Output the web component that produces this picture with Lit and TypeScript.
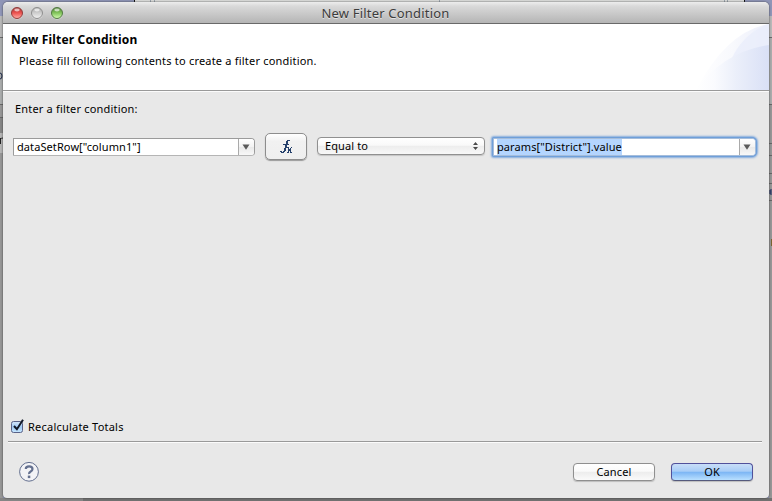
import { LitElement, html, css, svg } from "lit";
import { customElement, property } from "lit/decorators.js";

const arrow = html`<svg width="8" height="6" viewBox="0 0 8 6"><path d="M.5.5h7L4 5.8z" fill="#5a5a5a"/></svg>`;

@customElement("combo-field")
class ComboField extends LitElement {
  @property() value = "";
  @property({ type: Boolean, reflect: true }) focused = false;
  static styles = css`
    :host { display: flex; box-sizing: border-box; height: 18px; border: 1px solid #9b9b9b; border-bottom-color: #b5b5b5; border-radius: 0 4px 4px 0; background: #fff; }
    :host([focused]) { border-color: #a5bddb; box-shadow: 0 0 0 1px #6f9fd9, 0 0 2px 2px #84abdc; border-radius: 1px 4px 4px 1px; }
    .text { flex: 1; padding-left: 3px; line-height: 16px; white-space: pre; letter-spacing: .09px; }
    .text span { display: inline-block; height: 16px; }
    :host([focused]) .text span { background: #b4d5fe; }
    .drop { width: 16px; border-left: 1px solid #aaa; display: grid; align-items: center; justify-items: start; padding-left: 3px; box-sizing: border-box; background: linear-gradient(#fff, #f3f3f3 50%, #e9e9e9 51%, #f8f8f8); border-radius: 0 3px 3px 0; }
  `;
  render() {
    return html`<div class="text"><span>${this.value}</span></div><div class="drop">${arrow}</div>`;
  }
}

@customElement("push-button")
class PushButton extends LitElement {
  @property({ type: Boolean, reflect: true }) primary = false;
  static styles = css`
    :host { box-sizing: border-box; width: 82px; height: 18px; border: 1px solid #8f8f8f; border-radius: 4px; text-align: center; line-height: 16px; background: linear-gradient(#fff, #fafafa 45%, #ededed 52%, #fafafa); box-shadow: 0 1px 1px #bdbdbd; }
    :host([primary]) { border-color: #51519b; border-bottom-color: #555a7c; background: linear-gradient(#c9def8, #a8cdf7 45%, #7db6f4 52%, #b9e0ff); }
  `;
  render() { return html`<slot></slot>`; }
}

@customElement("app-root")
class AppRoot extends LitElement {
  static styles = css`
    :host { display: block; position: relative; box-sizing: border-box; width: 772px; height: 501px; padding: 2px 3px 3px; overflow: hidden; font: 11px "Noto Sans", "Open Sans", sans-serif; color: #000; background: #a5a5a5; }
    .behind { position: absolute; inset: 0; }
    .behind svg { display: block; }
    .window { position: relative; height: 496px; display: flex; flex-direction: column; border-radius: 5px 5px 4px 4px; overflow: hidden; background: #e8e8e8; box-shadow: 0 0 2px #333; }
    .bar { box-sizing: border-box; height: 22px; display: flex; align-items: center; padding-left: 7px; background: linear-gradient(#ededed, #d9d9d9 20%, #b5b5b5); border-bottom: 1px solid #696969; }
    .lights { display: flex; gap: 6px; width: 80px; }
    .lights svg { display: block; width: 14px; height: 14px; }
    .caption { flex: 1; text-align: center; padding-right: 88px; font-size: 13px; line-height: 20px; color: #3c3c3c; text-shadow: 0 1px #e4e4e4; letter-spacing: .2px; }
    .header { box-sizing: border-box; height: 67px; display: flex; background: #fff; border-bottom: 1px solid #999; }
    .titles { flex: 1; padding: 8px 0 0 8px; }
    .title { font-size: 12px; line-height: 16px; font-weight: 700; letter-spacing: .17px; }
    .message { padding-left: 8px; line-height: 16px; margin-top: 5px; letter-spacing: .2px; }
    .wave { display: block; }
    .content { flex: 1; display: flex; flex-direction: column; border-top: 1px solid #fbfbfb; padding: 0 5px; }
    .prompt { margin: 9px 0 0 7px; line-height: 16px; letter-spacing: .18px; }
    .row { display: flex; align-items: flex-start; margin-top: 16px; padding-left: 5px; height: 30px; }
    .left { width: 242px; margin-top: 5px; }
    .right { width: 263px; margin: 5px 0 0 8px; }
    .fx { box-sizing: border-box; width: 42px; height: 27px; margin-left: 10px; display: grid; place-items: center; border: 1px solid #8d8d8d; border-radius: 5px; background: linear-gradient(#fff, #f1f1f1 30%, #efefef); box-shadow: 0 1px 1px #999; }
    .select { box-sizing: border-box; width: 168px; height: 18px; margin: 4px 0 0 10px; padding: 0 5px 0 7px; display: flex; justify-content: space-between; align-items: center; border: 1px solid #909090; border-radius: 4px; background: linear-gradient(#fff, #f9f9f9 45%, #ededed 52%, #f8f8f8); box-shadow: 0 1px 1px #c4c4c4; line-height: 16px; letter-spacing: .1px; }
    .check { display: flex; align-items: center; margin: auto 0 6px 3px; height: 16px; letter-spacing: .22px; }
    .check svg { margin-right: 3px; }
    .check .t { padding-bottom: 2px; }
    .footer { height: 57px; display: flex; box-sizing: border-box; margin: 0 7px 0 5px; border-top: 1px solid #999; box-shadow: inset 0 1px #fbfbfb; padding: 19px 9px 0 11px; }
    .help { flex: 1; }
    .footer push-button + push-button { margin-left: 16px; }
    .footer push-button { margin-top: 2px; letter-spacing: .15px; }
    .t { white-space: pre; }
  `;

  light(id: string, dark: string, mid: string, pale: string, edge: string) {
    return html`<svg viewBox="0 0 14 14"><defs><linearGradient id=${id} x2="0" y2="1"><stop offset="0" stop-color=${dark}/><stop offset=".5" stop-color=${mid}/><stop offset="1" stop-color=${pale}/></linearGradient></defs>
      <circle cx="7" cy="7.5" r="6" fill="#eee" opacity=".7"/><circle cx="7" cy="7" r="5.5" fill="url(#${id})" stroke=${edge}/><ellipse cx="7" cy="4" rx="2.7" ry="1.4" fill="#fff" opacity=".65"/></svg>`;
  }

  backdrop() {
    const sides = [0, 769].map(x => svg`
      <rect x=${x} width="3" height="16" fill="#8f95b7"/><rect x=${x} y="16" width="3" height="21" fill="#b8b8b8"/>
      <rect x=${x} y="37" width="3" height="1" fill="#696969"/><rect x=${x} y="38" width="3" height="66" fill="#a9abab"/>
      <rect x=${x} y="104" width="3" height="1" fill="#666"/><rect x=${x} y="105" width="3" height="396" fill="#969696"/>`);
    return html`<svg width="772" height="501" viewBox="0 0 772 501">
      <rect width="772" height="501" fill="#8f95b7"/><rect x="135" width="610" height="3" fill="#dedfdd"/>
      <path d="M134.5 0v3M744.5 0v3" stroke="#111"/><path d="M150.5 0v3M154.5 0v3M439.5 0v3M724.5 0v3M727.5 0v3" stroke="#9ba5ae"/>
      ${sides}
      <path d="M0 117.5h3M769 143.5h3M769 155.5h3M769 173.5h3M769 183.5h3M769 200.5h3" stroke="#666"/>
      <rect y="118" width="3" height="16" fill="#858585"/><rect y="133" width="3" height="20" fill="#b5b5b5"/>
      <path d="M0 73q2 0 2 3t-2 3" fill="none" stroke="#182445"/><path d="M.5 144v-6M.5 139q1-1 2.5-1" fill="none" stroke="#222"/>
      <path d="M772 190h-2v4h2M770 192h2" fill="none" stroke="#15255d"/><rect x="771" y="239" width="1" height="7" fill="#786330"/>
      <rect y="498" width="83" height="3" fill="#858585"/><rect x="83" y="498" width="689" height="3" fill="#707070"/>
    </svg>`;
  }

  render() {
    return html`
      <div class="behind">${this.backdrop()}</div>
      <div class="window">
        <div class="bar">
          <div class="lights">
            ${this.light("r", "#9d3434", "#ee5350", "#ffb2a9", "#8f3c3b")}
            ${this.light("g", "#a5a5a5", "#cfcfcf", "#f3f3f3", "#8d8d8d")}
            ${this.light("n", "#4d7c32", "#83c65c", "#d6ffb4", "#527844")}
          </div>
          <div class="caption"><span class="t">New Filter Condition</span></div>
        </div>
        <div class="header">
          <div class="titles">
            <div class="title"><span class="t">New Filter Condition</span></div>
            <div class="message"><span class="t">Please fill following contents to create a filter condition.</span></div>
          </div>
          <svg class="wave" width="80" height="66" viewBox="0 0 80 66">
            <defs>
              <linearGradient id="w1"><stop offset="0" stop-color="#fff"/><stop offset=".5" stop-color="#f8f9fd"/><stop offset="1" stop-color="#eceffb"/></linearGradient>
              <linearGradient id="w2"><stop offset="0" stop-color="#fff"/><stop offset=".25" stop-color="#fafbfe"/><stop offset=".55" stop-color="#ebeffa"/><stop offset="1" stop-color="#d9e0f6"/></linearGradient>
            </defs>
            <path d="M7 66Q38 7 80 0V66z" fill="url(#w1)"/>
            <path d="M42 36Q54 9 80 0V40z" fill="#e8ecfb" opacity=".7"/>
            <path d="M7 66Q34 28 80 21V66z" fill="url(#w2)"/>
          </svg>
        </div>
        <div class="content">
          <div class="prompt"><span class="t">Enter a filter condition:</span></div>
          <div class="row">
            <combo-field class="left" value='dataSetRow["column1"]'></combo-field>
            <div class="fx"><svg width="14" height="15" viewBox="0 0 14 15" fill="#25406b" shape-rendering="crispEdges"><path d="M8 1h3v1H8zM7 2h2v3H7zM4 5h6v1H4zM6 6h2v3H6zM5 9h2v3H5zM4 12h2v1H4zM1 12h2v1H1zM2 13h3v1H2z"/><path d="M8 8h2v1H8zM12 8h1v1h-1zM9 9h1v4H9zM11 9h1v4h-1zM10 10h1v2h-1zM8 13h2v1H8zM11 13h2v1h-2z"/></svg></div>
            <div class="select"><span class="t">Equal to</span><svg width="7" height="10" viewBox="0 0 7 10"><path d="M1 4L3.5 1 6 4zM1 6h5L3.5 9z" fill="#4a4a4a"/></svg></div>
            <combo-field class="right" focused value='params["District"].value'></combo-field>
          </div>
          <div class="check">
            <svg width="14" height="16" viewBox="0 0 14 16"><defs><linearGradient id="cb" x2="0" y2="1"><stop offset="0" stop-color="#d7e8fb"/><stop offset=".5" stop-color="#a0c9f4"/><stop offset="1" stop-color="#c8e8ff"/></linearGradient></defs><rect x=".5" y="2.5" width="11" height="11" rx="2" fill="url(#cb)" stroke="#596288"/><path d="M3 7l2.9 3.2L12 .8" fill="none" stroke="#111827" stroke-width="2"/></svg>
            <span class="t">Recalculate Totals</span>
          </div>
        </div>
        <div class="footer">
          <div class="help"><svg width="22" height="22" viewBox="0 0 22 22" fill="none"><circle cx="10" cy="10.8" r="9.4" fill="#f3f3f6" stroke="#626e8e"/><path d="M6.8 8Q6.8 5.4 10.1 5.4T13.5 8Q13.5 9.5 11.7 10.4T10.1 13" stroke="#64708f" stroke-width="2.2"/><rect x="8.8" y="14.6" width="2.5" height="2.5" fill="#64708f"/></svg></div>
          <push-button><span class="t">Cancel</span></push-button>
          <push-button primary><span class="t">OK</span></push-button>
        </div>
      </div>`;
  }
}
